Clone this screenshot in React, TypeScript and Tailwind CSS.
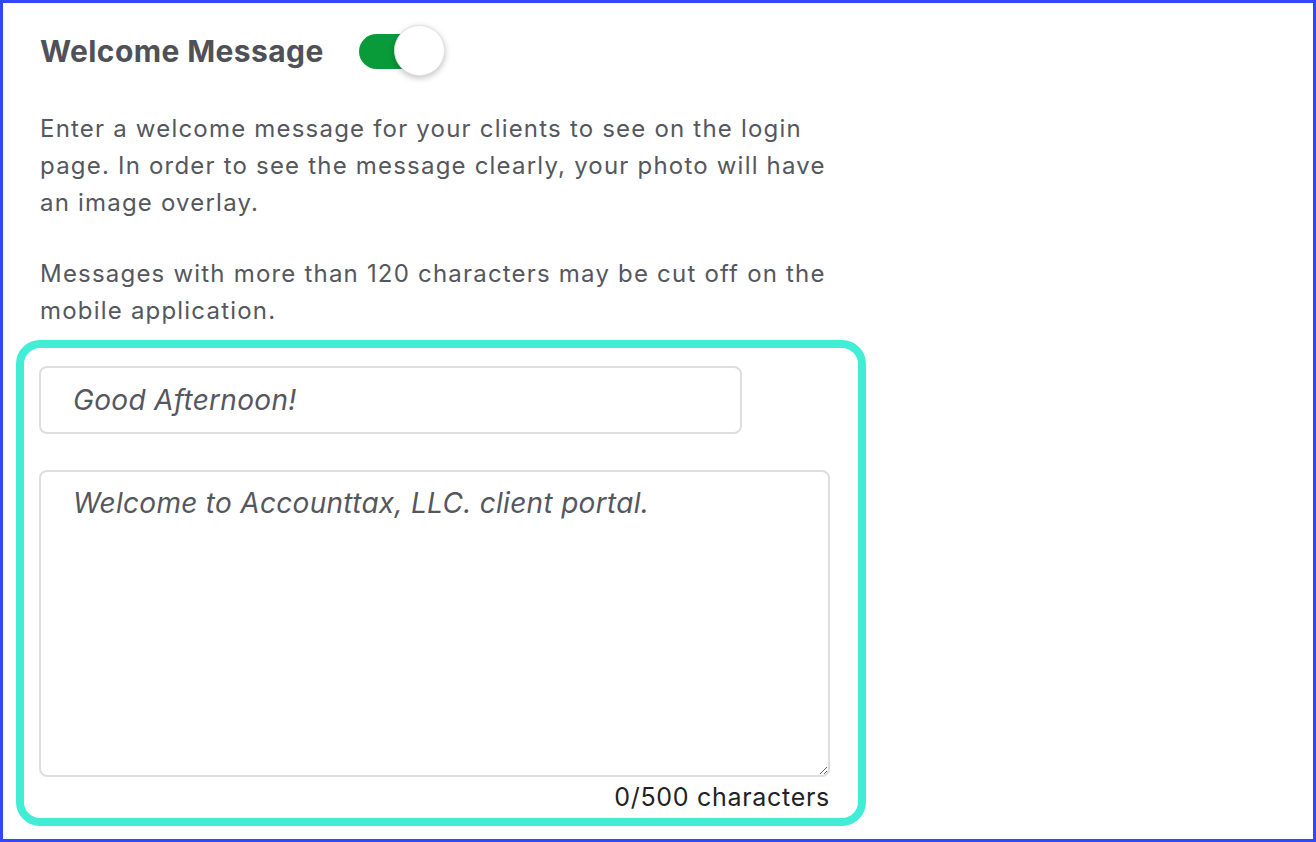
export default function App() {
  return (
    <div className="h-[842px] w-[1316px] border-[3px] border-[#3047ff] bg-white font-['Inter','Liberation_Sans',sans-serif]">
      <div className="pl-[37px] pt-[21px]">
        <div className="flex items-center">
          <h1 className="text-[30px] font-bold leading-[54px] tracking-[0.4px] text-[#505158]">Welcome Message</h1>
          <div className="relative ml-[35px] h-[52px] w-[88px]">
            <div className="absolute left-0 top-[9px] h-[35px] w-[62px] rounded-full bg-[#099b3a]" />
            <div className="absolute left-[35px] top-0 h-[51px] w-[51px] rounded-full border border-[#e2e2e2] bg-white shadow-[0_2px_6px_rgba(0,0,0,0.25)]" />
          </div>
        </div>
        <div className="mt-[32px] w-[796px] text-[24px] leading-[37px] tracking-[1.2px] text-[#55575e]">
          <p>
            Enter a welcome message for your clients to see on the login page. In order to see the message clearly,
            your photo will have an image overlay.
          </p>
          <p className="mt-[34px]">Messages with more than 120 characters may be cut off on the mobile application.</p>
        </div>
      </div>
      <div className="ml-[13px] mt-[11px] w-[850px] rounded-[24px] border-[8px] border-[#42edd6] pl-[15px] pr-[28px] pt-[18px]">
        <input
          defaultValue=""
          placeholder="Good Afternoon!"
          className="h-[68px] w-[703px] rounded-[8px] border-2 border-[#dedede] px-[32px] text-[28px] italic tracking-[0.3px] text-[#55575e] outline-none placeholder:text-[#55575e]"
        />
        <textarea
          placeholder="Welcome to Accounttax, LLC. client portal."
          className="mt-[36px] block h-[307px] w-[791px] rounded-[8px] border-2 border-[#dedede] px-[32px] py-[12px] text-[28px] italic leading-[38px] tracking-[0.3px] text-[#55575e] outline-none placeholder:text-[#55575e]"
        />
        <div className="h-[41px] text-right text-[25px] leading-[40px] tracking-[0.7px] text-[#1f2226]">0/500 characters</div>
      </div>
    </div>
  );
}
